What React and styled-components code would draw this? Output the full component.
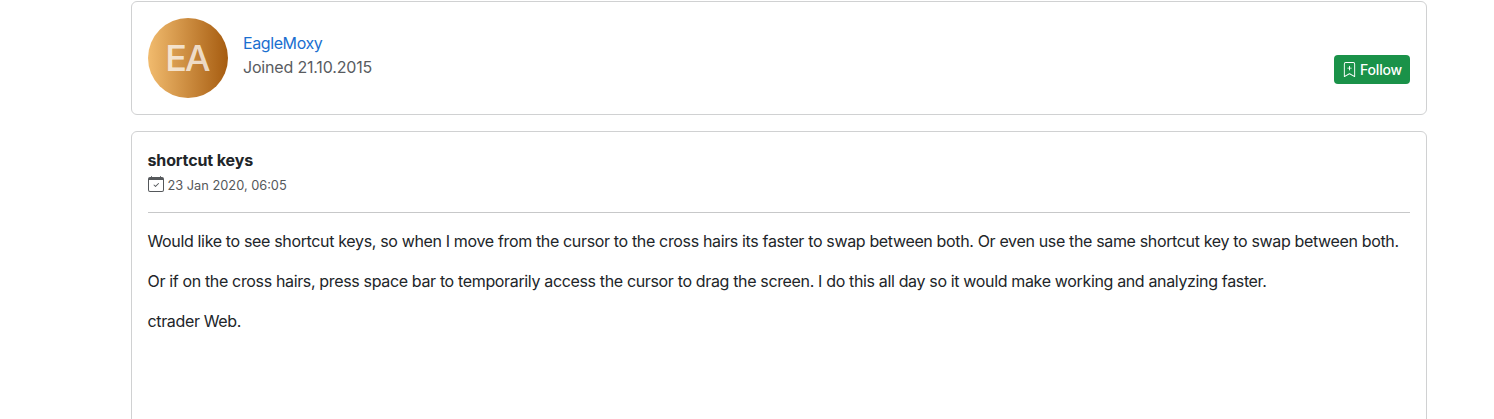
import React from "react";
import styled, { createGlobalStyle } from "styled-components";
import { BsBookmarkPlus, BsCalendarCheck } from "react-icons/bs";

const GlobalStyle = createGlobalStyle`
  *, *::before, *::after { box-sizing: border-box; }
  body {
    margin: 0;
    background: #fff;
    color: #212529;
    font-family: Inter, "Liberation Sans", sans-serif;
    font-size: 16px;
    line-height: 24px;
    overflow: hidden;
  }
`;

const Page = styled.main`
  display: flex;
  flex-direction: column;
  gap: 16px;
  height: 419px;
  padding: 1px 67px 0 131px;
  overflow: hidden;
`;

const Card = styled.section`
  flex: none;
  border: 1px solid #d0d1d2;
  border-radius: 6px;
  padding: 16px;
`;

const ProfileCard = styled(Card)`
  display: flex;
  height: 114px;
`;

const Avatar = styled.div`
  display: flex;
  align-items: center;
  justify-content: center;
  flex: none;
  width: 80px;
  height: 80px;
  padding-right: 2px;
  border-radius: 50%;
  background: linear-gradient(to right, #f1bb6e, #a65c10);
  color: rgba(255, 255, 255, 0.74);
  font-size: 36px;
  font-weight: 450;
  letter-spacing: -1.8px;
`;

const Identity = styled.div`
  flex: 1;
  margin-left: 15px;
  padding-top: 13px;
`;

const UserName = styled.a`
  display: block;
  width: max-content;
  color: #1a6fd0;
  text-decoration: none;
  letter-spacing: -0.4px;
`;

const Joined = styled.div`
  width: max-content;
  color: #595c5f;
  letter-spacing: -0.18px;
`;

const FollowButton = styled.button`
  display: flex;
  align-items: center;
  align-self: flex-start;
  gap: 3px;
  width: 76px;
  height: 29px;
  margin-top: 37px;
  padding: 0 0 0 8px;
  border: 0;
  border-radius: 4px;
  background: #1a9249;
  color: #fff;
  font: 500 14px/21px Inter, "Liberation Sans", sans-serif;
  letter-spacing: -0.2px;
  white-space: nowrap;

  svg { flex: none; }
`;

const PostCard = styled(Card)`
  height: 400px;
  padding-left: 15.5px;
`;

const Title = styled.h1`
  width: max-content;
  margin: 0;
  font-size: 16px;
  line-height: 24px;
  font-weight: 700;
  letter-spacing: -0.12px;
`;

const Meta = styled.div`
  display: flex;
  align-items: flex-start;
  gap: 4px;
  height: 24px;
  color: #55585b;

  svg { flex: none; margin-top: 4px; }
`;

const PostDate = styled.time`
  font-size: 12.8px;
  line-height: 28px;
`;

const Divider = styled.hr`
  height: 1px;
  margin: 16px 0;
  border: 0;
  background: #c7c8c9;
`;

const Paragraph = styled.p`
  width: max-content;
  margin: 0 0 16px;
  letter-spacing: -0.348px;
  white-space: nowrap;
`;

export default function App() {
  return (
    <>
      <GlobalStyle />
      <Page>
        <ProfileCard>
          <Avatar>EA</Avatar>
          <Identity>
            <UserName>EagleMoxy</UserName>
            <Joined>Joined 21.10.2015</Joined>
          </Identity>
          <FollowButton>
            <BsBookmarkPlus size={15} />
            Follow
          </FollowButton>
        </ProfileCard>
        <PostCard>
          <Title>shortcut keys</Title>
          <Meta>
            <BsCalendarCheck size={16} />
            <PostDate>23 Jan 2020, 06:05</PostDate>
          </Meta>
          <Divider />
          <Paragraph>
            Would like to see shortcut keys, so when I move from the cursor to the cross hairs its faster to swap between both. Or even use the same shortcut key to swap between both.
          </Paragraph>
          <Paragraph>
            Or if on the cross hairs, press space bar to temporarily access the cursor to drag the screen. I do this all day so it would make working and analyzing faster.
          </Paragraph>
          <Paragraph>ctrader Web.</Paragraph>
        </PostCard>
      </Page>
    </>
  );
}
